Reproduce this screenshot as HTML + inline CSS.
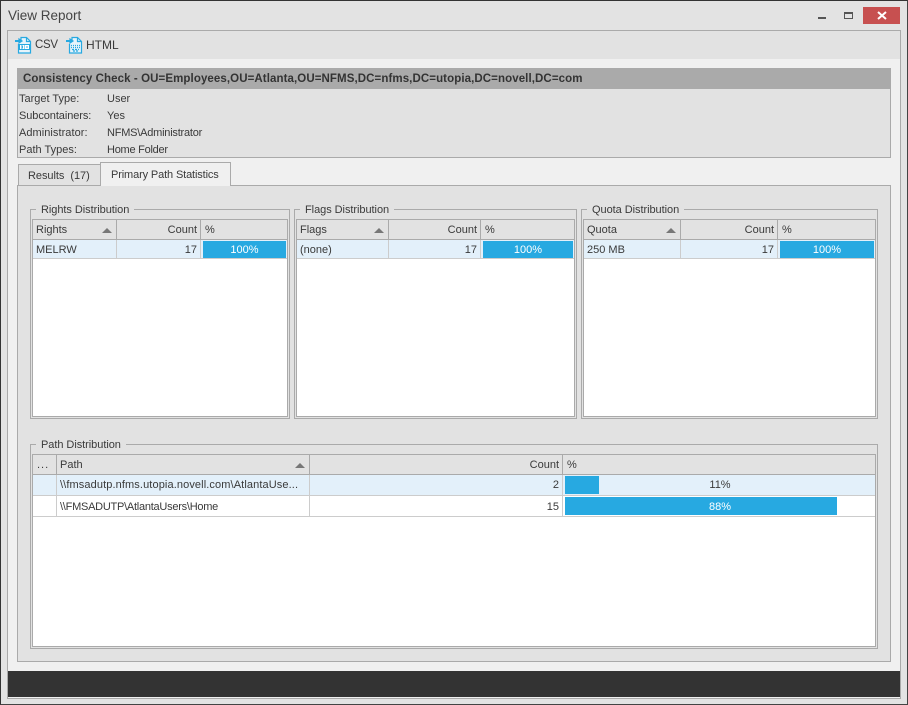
<!DOCTYPE html>
<html><head><meta charset="utf-8"><style>
html,body{margin:0;padding:0}
body{width:908px;height:705px;overflow:hidden;position:relative;background:#e3e3e3;font:11px "Liberation Sans",sans-serif;color:#3a3a3a}
div,span{position:absolute;box-sizing:border-box;white-space:nowrap}
.t{height:14px;line-height:14px}
.v{background:#aaa;width:1px}
.g{border:1px solid #aaa}
.grid{border:1px solid #aaa;background:#fff}
.hd{left:0;right:0;top:0;height:20px;background:#e2e2e2;border-bottom:1px solid #aaa}
.bar{background:#27a9e1;color:#fff;text-align:center;line-height:18px}
.leg{background:#e2e2e2;padding:0 5px;height:14px;line-height:14px;top:-7px;left:5px;letter-spacing:-.05px}
.arrow{width:0;height:0;border-left:5px solid transparent;border-right:5px solid transparent;border-bottom:5px solid #777}
</style></head><body>
<div style="left:0;top:0;width:908px;height:705px;border:1px solid #333;border-right-color:#444;border-bottom-color:#444"></div>
<div style="left:8px;top:8px;font-size:13.5px;line-height:16px;color:#444">View Report</div>
<div style="left:818px;top:17px;width:8px;height:2px;background:#555"></div>
<div style="left:844px;top:12px;width:9px;height:7px;border:1px solid #555;border-top-width:2px"></div>
<div style="left:863px;top:7px;width:37px;height:17px;background:#c75050"></div>
<svg style="position:absolute;left:877px;top:11px" width="10" height="9"><path d="M1 1L9 8M9 1L1 8" stroke="#fff" stroke-width="2"/></svg>

<div style="left:7px;top:30px;width:894px;height:669px;border:1px solid #aaa;background:#f0f0f0"></div>
<div style="left:8px;top:31px;width:892px;height:28px;background:#e2e2e2"></div>

<svg style="position:absolute;left:15px;top:36px" width="17" height="18" fill="none" stroke="#27a9e1" stroke-width="1.2"><path d="M6 4V1.500H11.500L15.500 5.500V17H3.500V8" fill="#e6f4fb"/><path d="M11.500 1.500V5.500H15.500"/><path d="M0 5H6" stroke-width="2"/><path d="M4 3L7 5L4 7Z" fill="#27a9e1"/><rect x="4.500" y="8.500" width="10" height="5" fill="#fff" stroke-width="1"/><path d="M6 10H7.500V12H6M9 10H10M9 12H10M12 10V12" stroke-width=".9"/></svg>
<div class="t" style="left:35px;top:38px;font-size:11.5px;letter-spacing:-.3px">CSV</div>
<svg style="position:absolute;left:66px;top:36px" width="17" height="18" fill="none" stroke="#27a9e1" stroke-width="1.2"><path d="M6 4V1.500H11.500L15.500 5.500V17H3.500V8" fill="#e6f4fb"/><path d="M11.500 1.500V5.500H15.500"/><path d="M0 5H6" stroke-width="2"/><path d="M4 3L7 5L4 7Z" fill="#27a9e1"/><path d="M5 9.500H14M5 11.500H14" stroke-dasharray="1 1"/><path d="M6 13.500H13M7 15H12" stroke-dasharray="2 1"/></svg>
<div class="t" style="left:86px;top:38px;font-size:12px">HTML</div>

<div style="left:17px;top:68px;width:874px;height:90px;border:1px solid #aaa;background:#e2e2e2"></div>
<div style="left:17px;top:68px;width:874px;height:21px;background:#aaa"></div>
<div class="t" style="left:23px;top:72px;font-weight:bold;color:#333;font-size:11.5px;letter-spacing:.09px">Consistency Check - OU=Employees,OU=Atlanta,OU=NFMS,DC=nfms,DC=utopia,DC=novell,DC=com</div>
<div class="t" style="left:19px;top:92px">Target Type:</div><div class="t" style="left:107px;top:92px">User</div>
<div class="t" style="left:19px;top:109px;letter-spacing:-.08px">Subcontainers:</div><div class="t" style="left:107px;top:109px">Yes</div>
<div class="t" style="left:19px;top:126px;letter-spacing:.05px">Administrator:</div><div class="t" style="left:107px;top:126px;letter-spacing:-.22px">NFMS\Administrator</div>
<div class="t" style="left:19px;top:143px">Path Types:</div><div class="t" style="left:107px;top:143px;letter-spacing:-.25px">Home Folder</div>

<div style="left:17px;top:185px;width:874px;height:477px;border:1px solid #aaa;background:#e2e2e2"></div>
<div style="left:18px;top:164px;width:83px;height:22px;border:1px solid #aaa;background:#e2e2e2"></div>
<div class="t" style="left:28px;top:169px;letter-spacing:-.05px">Results&nbsp; (17)</div>
<div style="left:100px;top:162px;width:131px;height:24px;border:1px solid #aaa;border-bottom:0;background:#f0f0f0"></div>
<div style="left:101px;top:185px;width:129px;height:1px;background:#f0f0f0"></div>
<div class="t" style="left:111px;top:168px;letter-spacing:-.13px">Primary Path Statistics</div>

<!-- Rights -->
<div class="g" style="left:30px;top:209px;width:260px;height:210px"><div class="leg">Rights Distribution</div></div>
<div class="grid" style="left:32px;top:219px;width:256px;height:198px">
 <div class="hd"></div>
 <div style="left:0;right:0;top:20px;height:19px;background:#e3f0fa;border-bottom:1px solid #ccc"></div>
 <div class="v" style="left:83px;top:0;height:20px"></div><div class="v" style="left:167px;top:0;height:20px"></div>
 <div class="v" style="left:83px;top:20px;height:19px;background:#ccc"></div><div class="v" style="left:167px;top:20px;height:19px;background:#ccc"></div>
 <div class="t" style="left:3px;top:3px">Rights</div><div class="arrow" style="left:69px;top:8px"></div>
 <div class="t" style="right:90px;top:3px">Count</div><div class="t" style="left:172px;top:3px">%</div>
 <div class="t" style="left:3px;top:23px">MELRW</div><div class="t" style="right:90px;top:23px">17</div>
 <div class="bar" style="left:170px;top:21px;width:83px;height:17px;line-height:18px">100%</div>
</div>

<!-- Flags -->
<div class="g" style="left:294px;top:209px;width:283px;height:210px"><div class="leg">Flags Distribution</div></div>
<div class="grid" style="left:296px;top:219px;width:279px;height:198px">
 <div class="hd"></div>
 <div style="left:0;right:0;top:20px;height:19px;background:#e3f0fa;border-bottom:1px solid #ccc"></div>
 <div class="v" style="left:91px;top:0;height:20px"></div><div class="v" style="left:183px;top:0;height:20px"></div>
 <div class="v" style="left:91px;top:20px;height:19px;background:#ccc"></div><div class="v" style="left:183px;top:20px;height:19px;background:#ccc"></div>
 <div class="t" style="left:3px;top:3px">Flags</div><div class="arrow" style="left:77px;top:8px"></div>
 <div class="t" style="right:97px;top:3px">Count</div><div class="t" style="left:188px;top:3px">%</div>
 <div class="t" style="left:3px;top:23px">(none)</div><div class="t" style="right:97px;top:23px">17</div>
 <div class="bar" style="left:186px;top:21px;width:90px;height:17px;line-height:18px">100%</div>
</div>

<!-- Quota -->
<div class="g" style="left:581px;top:209px;width:297px;height:210px"><div class="leg">Quota Distribution</div></div>
<div class="grid" style="left:583px;top:219px;width:293px;height:198px">
 <div class="hd"></div>
 <div style="left:0;right:0;top:20px;height:19px;background:#e3f0fa;border-bottom:1px solid #ccc"></div>
 <div class="v" style="left:96px;top:0;height:20px"></div><div class="v" style="left:193px;top:0;height:20px"></div>
 <div class="v" style="left:96px;top:20px;height:19px;background:#ccc"></div><div class="v" style="left:193px;top:20px;height:19px;background:#ccc"></div>
 <div class="t" style="left:3px;top:3px">Quota</div><div class="arrow" style="left:82px;top:8px"></div>
 <div class="t" style="right:101px;top:3px">Count</div><div class="t" style="left:198px;top:3px">%</div>
 <div class="t" style="left:3px;top:23px">250 MB</div><div class="t" style="right:101px;top:23px">17</div>
 <div class="bar" style="left:196px;top:21px;width:94px;height:17px;line-height:18px">100%</div>
</div>

<!-- Path -->
<div class="g" style="left:30px;top:444px;width:848px;height:205px"><div class="leg">Path Distribution</div></div>
<div class="grid" style="left:32px;top:454px;width:844px;height:193px">
 <div class="hd"></div>
 <div style="left:0;right:0;top:20px;height:21px;background:#e3f0fa;border-bottom:1px solid #ccc"></div>
 <div style="left:0;right:0;top:41px;height:21px;background:#fff;border-bottom:1px solid #ccc"></div>
 <div class="v" style="left:23px;top:0;height:20px"></div><div class="v" style="left:276px;top:0;height:20px"></div><div class="v" style="left:529px;top:0;height:20px"></div>
 <div class="v" style="left:23px;top:20px;height:42px;background:#ccc"></div><div class="v" style="left:276px;top:20px;height:42px;background:#ccc"></div><div class="v" style="left:529px;top:20px;height:42px;background:#ccc"></div>
 <div class="t" style="left:4px;top:3px;letter-spacing:1px">...</div><div class="t" style="left:27px;top:3px">Path</div><div class="arrow" style="left:262px;top:8px"></div>
 <div class="t" style="right:316px;top:3px">Count</div><div class="t" style="left:534px;top:3px">%</div>
 <div class="t" style="left:27px;top:23px;letter-spacing:.11px">\\fmsadutp.nfms.utopia.novell.com\AtlantaUse...</div><div class="t" style="right:316px;top:23px">2</div>
 <div class="bar" style="left:532px;top:21px;width:34px;height:18px"></div>
 <div class="t" style="left:532px;top:23px;width:310px;text-align:center">11%</div>
 <div class="t" style="left:27px;top:45px;letter-spacing:-.25px">\\FMSADUTP\AtlantaUsers\Home</div><div class="t" style="right:316px;top:45px">15</div>
 <div class="bar" style="left:532px;top:42px;width:272px;height:18px"></div>
 <div class="t" style="left:532px;top:45px;width:310px;text-align:center;color:#fff">88%</div>
</div>

<div style="left:8px;top:671px;width:892px;height:26px;background:#333"></div>
</body></html>
